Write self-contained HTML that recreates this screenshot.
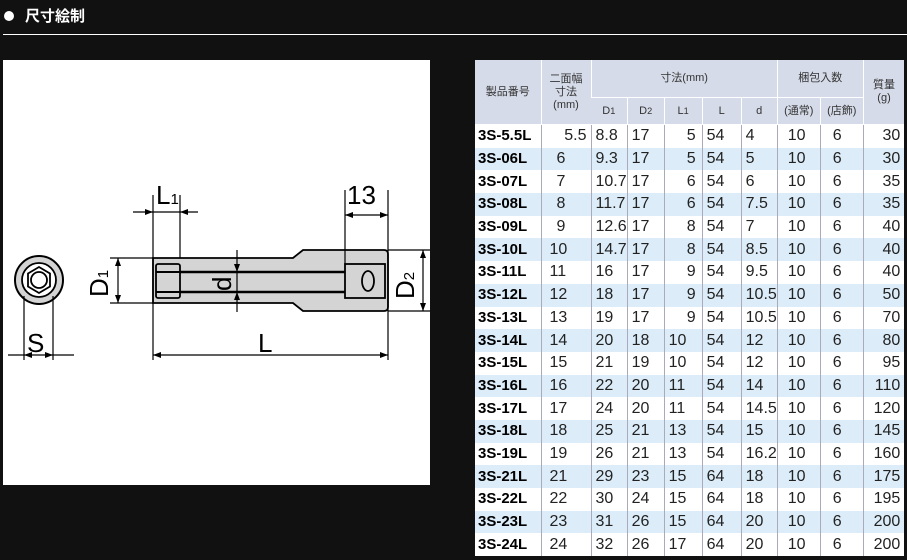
<!DOCTYPE html>
<html><head><meta charset="utf-8"><style>
body{margin:0;width:907px;height:560px;background:#111;overflow:hidden;font-family:"Liberation Sans","Noto Sans CJK JP",sans-serif;position:relative}
.t{position:absolute;left:25px;top:5px;color:#fff;font-weight:bold;font-size:15px}
.dot{position:absolute;left:4px;top:11px;width:10px;height:10px;border-radius:50%;background:#fff}
.hr{position:absolute;left:3px;top:34px;width:904px;height:1px;background:#fff}
.panel{position:absolute;left:3px;top:60px;width:427px;height:425px;background:#fff}
table{position:absolute;left:475px;top:60px;border-collapse:collapse;background:#fff;table-layout:fixed}
td{padding:0 0 0 4px;height:22.7px;font-size:16px;color:#222;border-left:1px solid #aab;white-space:nowrap;overflow:hidden;line-height:22px}
td:first-child{font-weight:bold;color:#000;border-left:none;font-size:15px;padding-left:3px}
tr:nth-child(odd).r td{background:#fff}
tr:nth-child(even).r td{background:#dcedf9}
th{background:#d5dbe8;font-weight:normal;font-size:11px;color:#333;border-left:1px solid #fff;border-bottom:1px solid #fff;line-height:13px;padding:0}
th:first-child{border-left:none}
</style></head><body>
<div class="dot"></div><div class="t">尺寸絵制</div><div class="hr"></div>
<div class="panel"></div>
<svg style="position:absolute;left:0;top:0" width="907" height="560" font-family="Liberation Sans, sans-serif">
<g stroke="#000" fill="none" stroke-width="1.2">
<circle cx="39" cy="280" r="24" fill="#d4d4d4" stroke-width="2"/>
<circle cx="39" cy="280" r="17" fill="#fff" stroke-width="1.8"/>
<polygon points="39,267 50,273.5 50,286.5 39,293 28,286.5 28,273.5" fill="#fff" stroke-width="1.8"/>
<circle cx="39" cy="280" r="8" stroke-width="1.8"/>
<line x1="24" y1="296" x2="24" y2="360"/><line x1="53" y1="296" x2="53" y2="360"/>
<line x1="8" y1="355" x2="74" y2="355"/>
<path d="M153 258 H293 L303 250 H384 Q388 250 388 254 V307 Q388 311 384 311 H303 L293 303 H153 Z" fill="#d4d4d4" stroke-width="1.8"/>
<line x1="180" y1="272" x2="345" y2="272" stroke-width="2.5"/>
<line x1="180" y1="292" x2="345" y2="292" stroke-width="2.5"/>
<rect x="156" y="264" width="24" height="34" rx="2" fill="#d4d4d4" stroke-width="1.8"/>
<line x1="156" y1="272" x2="180" y2="272" stroke-width="2"/><line x1="156" y1="292" x2="180" y2="292" stroke-width="2"/>
<rect x="345" y="264" width="40" height="34" fill="#d4d4d4" stroke-width="1.8"/>
<ellipse cx="368" cy="281" rx="6" ry="10" stroke-width="1.8"/>
<line x1="153" y1="195" x2="153" y2="360"/><line x1="180" y1="195" x2="180" y2="258"/>
<line x1="133" y1="212" x2="198" y2="212"/>
<line x1="345" y1="190" x2="345" y2="264"/><line x1="388" y1="190" x2="388" y2="360"/>
<line x1="345" y1="215" x2="388" y2="215"/>
<line x1="110" y1="258" x2="153" y2="258"/><line x1="110" y1="303" x2="153" y2="303"/>
<line x1="118" y1="258" x2="118" y2="303"/>
<line x1="388" y1="250" x2="430" y2="250"/><line x1="388" y1="311" x2="430" y2="311"/>
<line x1="423" y1="250" x2="423" y2="311"/>
<line x1="237" y1="250" x2="237" y2="312"/>
<line x1="153" y1="355" x2="388" y2="355"/>
</g>
<g fill="#000">
<path d="M24 355l8-3v6zM53 355l-8-3v6z"/><path d="M153 212l-8-3v6zM180 212l8-3v6z"/>
<path d="M345 215l8-3v6zM388 215l-8-3v6z"/>
<path d="M118 258l-3 8h6zM118 303l-3-8h6z"/><path d="M423 250l-3 8h6zM423 311l-3-8h6z"/>
<path d="M237 272l-3-8h6zM237 292l-3 8h6z"/>
<path d="M153 355l8-3v6zM388 355l-8-3v6z"/>
</g>
<g font-size="26" fill="#000">
<text x="27" y="352">S</text>
<text x="156" y="204">L<tspan font-size="15">1</tspan></text>
<text x="347" y="204">13</text>
<text x="258" y="352">L</text>
<text transform="translate(108,297) rotate(-90)">D<tspan font-size="15">1</tspan></text>
<text transform="translate(414,299) rotate(-90)">D<tspan font-size="15">2</tspan></text>
<text transform="translate(231,291) rotate(-90)">d</text>
</g>
</svg>
<table>
<colgroup><col style="width:66px"><col style="width:50px"><col style="width:36px"><col style="width:37px"><col style="width:38px"><col style="width:39px"><col style="width:33px"><col style="width:43px"><col style="width:43px"><col style="width:41px"></colgroup>
<tr><th rowspan="2" style="height:64px">製品番号</th><th rowspan="2">二面幅<br>寸法<br>(mm)</th><th colspan="5" style="height:37px">寸法(mm)</th><th colspan="2">梱包入数</th><th rowspan="2">質量<br>(g)</th></tr>
<tr><th style="height:26px">D<small>1</small></th><th>D<small>2</small></th><th>L<small>1</small></th><th>L</th><th>d</th><th>(通常)</th><th>(店飾)</th></tr>
<tr class="r"><td>3S-5.5L</td><td style="text-align:right;padding-right:4px">5.5</td><td>8.8</td><td>17</td><td style="text-align:right;padding-right:6px">5</td><td>54</td><td>4</td><td style="padding-left:10px">10</td><td style="padding-left:12px">6</td><td style="text-align:right;padding-right:4px">30</td></tr>
<tr class="r"><td>3S-06L</td><td style="padding-left:15px">6</td><td>9.3</td><td>17</td><td style="text-align:right;padding-right:6px">5</td><td>54</td><td>5</td><td style="padding-left:10px">10</td><td style="padding-left:12px">6</td><td style="text-align:right;padding-right:4px">30</td></tr>
<tr class="r"><td>3S-07L</td><td style="padding-left:15px">7</td><td>10.7</td><td>17</td><td style="text-align:right;padding-right:6px">6</td><td>54</td><td>6</td><td style="padding-left:10px">10</td><td style="padding-left:12px">6</td><td style="text-align:right;padding-right:4px">35</td></tr>
<tr class="r"><td>3S-08L</td><td style="padding-left:15px">8</td><td>11.7</td><td>17</td><td style="text-align:right;padding-right:6px">6</td><td>54</td><td>7.5</td><td style="padding-left:10px">10</td><td style="padding-left:12px">6</td><td style="text-align:right;padding-right:4px">35</td></tr>
<tr class="r"><td>3S-09L</td><td style="padding-left:15px">9</td><td>12.6</td><td>17</td><td style="text-align:right;padding-right:6px">8</td><td>54</td><td>7</td><td style="padding-left:10px">10</td><td style="padding-left:12px">6</td><td style="text-align:right;padding-right:4px">40</td></tr>
<tr class="r"><td>3S-10L</td><td style="padding-left:8px">10</td><td>14.7</td><td>17</td><td style="text-align:right;padding-right:6px">8</td><td>54</td><td>8.5</td><td style="padding-left:10px">10</td><td style="padding-left:12px">6</td><td style="text-align:right;padding-right:4px">40</td></tr>
<tr class="r"><td>3S-11L</td><td style="padding-left:8px">11</td><td>16</td><td>17</td><td style="text-align:right;padding-right:6px">9</td><td>54</td><td>9.5</td><td style="padding-left:10px">10</td><td style="padding-left:12px">6</td><td style="text-align:right;padding-right:4px">40</td></tr>
<tr class="r"><td>3S-12L</td><td style="padding-left:8px">12</td><td>18</td><td>17</td><td style="text-align:right;padding-right:6px">9</td><td>54</td><td>10.5</td><td style="padding-left:10px">10</td><td style="padding-left:12px">6</td><td style="text-align:right;padding-right:4px">50</td></tr>
<tr class="r"><td>3S-13L</td><td style="padding-left:8px">13</td><td>19</td><td>17</td><td style="text-align:right;padding-right:6px">9</td><td>54</td><td>10.5</td><td style="padding-left:10px">10</td><td style="padding-left:12px">6</td><td style="text-align:right;padding-right:4px">70</td></tr>
<tr class="r"><td>3S-14L</td><td style="padding-left:8px">14</td><td>20</td><td>18</td><td>10</td><td>54</td><td>12</td><td style="padding-left:10px">10</td><td style="padding-left:12px">6</td><td style="text-align:right;padding-right:4px">80</td></tr>
<tr class="r"><td>3S-15L</td><td style="padding-left:8px">15</td><td>21</td><td>19</td><td>10</td><td>54</td><td>12</td><td style="padding-left:10px">10</td><td style="padding-left:12px">6</td><td style="text-align:right;padding-right:4px">95</td></tr>
<tr class="r"><td>3S-16L</td><td style="padding-left:8px">16</td><td>22</td><td>20</td><td>11</td><td>54</td><td>14</td><td style="padding-left:10px">10</td><td style="padding-left:12px">6</td><td style="text-align:right;padding-right:4px">110</td></tr>
<tr class="r"><td>3S-17L</td><td style="padding-left:8px">17</td><td>24</td><td>20</td><td>11</td><td>54</td><td>14.5</td><td style="padding-left:10px">10</td><td style="padding-left:12px">6</td><td style="text-align:right;padding-right:4px">120</td></tr>
<tr class="r"><td>3S-18L</td><td style="padding-left:8px">18</td><td>25</td><td>21</td><td>13</td><td>54</td><td>15</td><td style="padding-left:10px">10</td><td style="padding-left:12px">6</td><td style="text-align:right;padding-right:4px">145</td></tr>
<tr class="r"><td>3S-19L</td><td style="padding-left:8px">19</td><td>26</td><td>21</td><td>13</td><td>54</td><td>16.2</td><td style="padding-left:10px">10</td><td style="padding-left:12px">6</td><td style="text-align:right;padding-right:4px">160</td></tr>
<tr class="r"><td>3S-21L</td><td style="padding-left:8px">21</td><td>29</td><td>23</td><td>15</td><td>64</td><td>18</td><td style="padding-left:10px">10</td><td style="padding-left:12px">6</td><td style="text-align:right;padding-right:4px">175</td></tr>
<tr class="r"><td>3S-22L</td><td style="padding-left:8px">22</td><td>30</td><td>24</td><td>15</td><td>64</td><td>18</td><td style="padding-left:10px">10</td><td style="padding-left:12px">6</td><td style="text-align:right;padding-right:4px">195</td></tr>
<tr class="r"><td>3S-23L</td><td style="padding-left:8px">23</td><td>31</td><td>26</td><td>15</td><td>64</td><td>20</td><td style="padding-left:10px">10</td><td style="padding-left:12px">6</td><td style="text-align:right;padding-right:4px">200</td></tr>
<tr class="r"><td>3S-24L</td><td style="padding-left:8px">24</td><td>32</td><td>26</td><td>17</td><td>64</td><td>20</td><td style="padding-left:10px">10</td><td style="padding-left:12px">6</td><td style="text-align:right;padding-right:4px">200</td></tr>
</table>
</body></html>
